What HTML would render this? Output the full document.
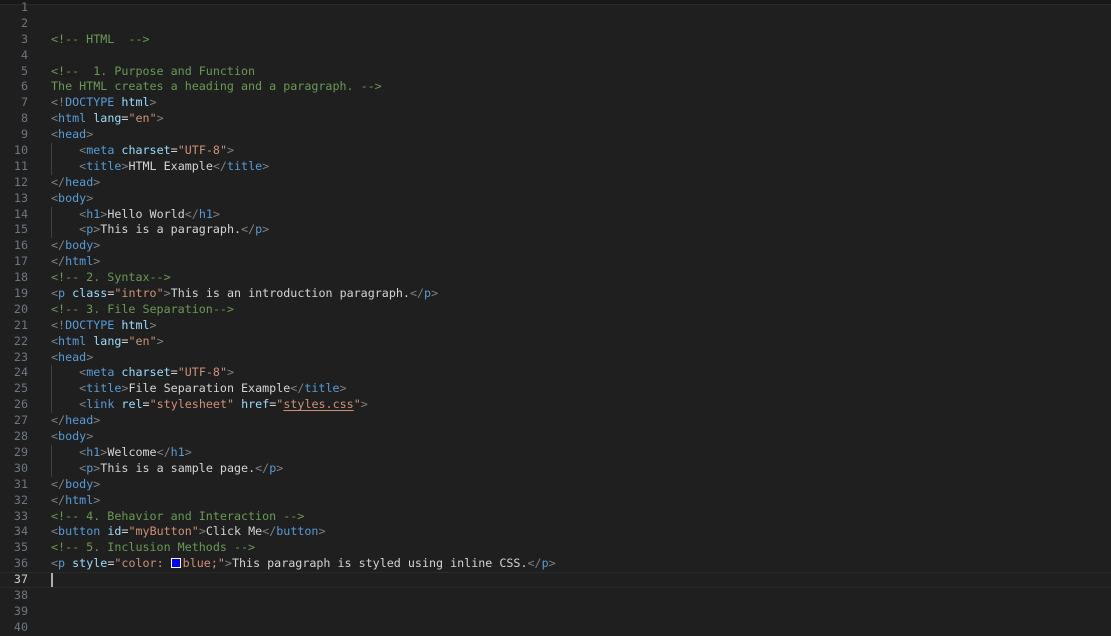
<!DOCTYPE html>
<html><head><meta charset="utf-8"><style>
html,body{margin:0;padding:0;background:#1f1f1f;width:1111px;height:626px;overflow:hidden}
.top{position:absolute;left:0;top:0;width:1111px;height:4px;background:#181818;border-bottom:1px solid #2b2b2b}
.ed{position:absolute;left:0;top:0px;width:1111px;font-family:"DejaVu Sans Mono","Liberation Mono",monospace;font-size:11.7px;line-height:15.9px;color:#d4d4d4}
.l{position:relative;height:15.9px;box-sizing:border-box}
.n{position:absolute;left:0;width:28px;text-align:right;color:#6e7681}
.c{position:absolute;left:51px;white-space:pre}
.cur{border-top:1px solid #2a2a2a;border-bottom:1px solid #2a2a2a;line-height:13.9px}
.cur .n{color:#cccccc}
.g{position:absolute;left:51px;top:0;width:1px;height:15.9px;background:#404040}
.cm{color:#6a9955}.b{color:#808080}.t{color:#569cd6}.a{color:#9cdcfe}.s{color:#ce9178}
.u{text-decoration:underline;text-underline-offset:2px}
.sw{display:inline-block;width:8px;height:8px;border:1px solid #fff;background:#0000ff;margin:0 2px 0 0;vertical-align:-1px}
.caret{display:inline-block;width:1.5px;height:14px;background:#aeafad;vertical-align:-3px}
</style></head><body>
<div class="top"></div>
<div class="ed">
<div class="l"><span class="n">1</span></div>
<div class="l"><span class="n">2</span></div>
<div class="l"><span class="n">3</span><span class="c cm">&lt;!-- HTML  --&gt;</span></div>
<div class="l"><span class="n">4</span></div>
<div class="l"><span class="n">5</span><span class="c cm">&lt;!--  1. Purpose and Function</span></div>
<div class="l"><span class="n">6</span><span class="c cm">The HTML creates a heading and a paragraph. --&gt;</span></div>
<div class="l"><span class="n">7</span><span class="c"><span class="b">&lt;!</span><span class="t">DOCTYPE</span> <span class="a">html</span><span class="b">&gt;</span></span></div>
<div class="l"><span class="n">8</span><span class="c"><span class="b">&lt;</span><span class="t">html</span> <span class="a">lang</span>=<span class="s">"en"</span><span class="b">&gt;</span></span></div>
<div class="l"><span class="n">9</span><span class="c"><span class="b">&lt;</span><span class="t">head</span><span class="b">&gt;</span></span></div>
<div class="l"><span class="n">10</span><span class="g"></span><span class="c">    <span class="b">&lt;</span><span class="t">meta</span> <span class="a">charset</span>=<span class="s">"UTF-8"</span><span class="b">&gt;</span></span></div>
<div class="l"><span class="n">11</span><span class="g"></span><span class="c">    <span class="b">&lt;</span><span class="t">title</span><span class="b">&gt;</span>HTML Example<span class="b">&lt;/</span><span class="t">title</span><span class="b">&gt;</span></span></div>
<div class="l"><span class="n">12</span><span class="c"><span class="b">&lt;/</span><span class="t">head</span><span class="b">&gt;</span></span></div>
<div class="l"><span class="n">13</span><span class="c"><span class="b">&lt;</span><span class="t">body</span><span class="b">&gt;</span></span></div>
<div class="l"><span class="n">14</span><span class="g"></span><span class="c">    <span class="b">&lt;</span><span class="t">h1</span><span class="b">&gt;</span>Hello World<span class="b">&lt;/</span><span class="t">h1</span><span class="b">&gt;</span></span></div>
<div class="l"><span class="n">15</span><span class="g"></span><span class="c">    <span class="b">&lt;</span><span class="t">p</span><span class="b">&gt;</span>This is a paragraph.<span class="b">&lt;/</span><span class="t">p</span><span class="b">&gt;</span></span></div>
<div class="l"><span class="n">16</span><span class="c"><span class="b">&lt;/</span><span class="t">body</span><span class="b">&gt;</span></span></div>
<div class="l"><span class="n">17</span><span class="c"><span class="b">&lt;/</span><span class="t">html</span><span class="b">&gt;</span></span></div>
<div class="l"><span class="n">18</span><span class="c cm">&lt;!-- 2. Syntax--&gt;</span></div>
<div class="l"><span class="n">19</span><span class="c"><span class="b">&lt;</span><span class="t">p</span> <span class="a">class</span>=<span class="s">"intro"</span><span class="b">&gt;</span>This is an introduction paragraph.<span class="b">&lt;/</span><span class="t">p</span><span class="b">&gt;</span></span></div>
<div class="l"><span class="n">20</span><span class="c cm">&lt;!-- 3. File Separation--&gt;</span></div>
<div class="l"><span class="n">21</span><span class="c"><span class="b">&lt;!</span><span class="t">DOCTYPE</span> <span class="a">html</span><span class="b">&gt;</span></span></div>
<div class="l"><span class="n">22</span><span class="c"><span class="b">&lt;</span><span class="t">html</span> <span class="a">lang</span>=<span class="s">"en"</span><span class="b">&gt;</span></span></div>
<div class="l"><span class="n">23</span><span class="c"><span class="b">&lt;</span><span class="t">head</span><span class="b">&gt;</span></span></div>
<div class="l"><span class="n">24</span><span class="g"></span><span class="c">    <span class="b">&lt;</span><span class="t">meta</span> <span class="a">charset</span>=<span class="s">"UTF-8"</span><span class="b">&gt;</span></span></div>
<div class="l"><span class="n">25</span><span class="g"></span><span class="c">    <span class="b">&lt;</span><span class="t">title</span><span class="b">&gt;</span>File Separation Example<span class="b">&lt;/</span><span class="t">title</span><span class="b">&gt;</span></span></div>
<div class="l"><span class="n">26</span><span class="g"></span><span class="c">    <span class="b">&lt;</span><span class="t">link</span> <span class="a">rel</span>=<span class="s">"stylesheet"</span> <span class="a">href</span>=<span class="s">"<span class="u">styles.css</span>"</span><span class="b">&gt;</span></span></div>
<div class="l"><span class="n">27</span><span class="c"><span class="b">&lt;/</span><span class="t">head</span><span class="b">&gt;</span></span></div>
<div class="l"><span class="n">28</span><span class="c"><span class="b">&lt;</span><span class="t">body</span><span class="b">&gt;</span></span></div>
<div class="l"><span class="n">29</span><span class="g"></span><span class="c">    <span class="b">&lt;</span><span class="t">h1</span><span class="b">&gt;</span>Welcome<span class="b">&lt;/</span><span class="t">h1</span><span class="b">&gt;</span></span></div>
<div class="l"><span class="n">30</span><span class="g"></span><span class="c">    <span class="b">&lt;</span><span class="t">p</span><span class="b">&gt;</span>This is a sample page.<span class="b">&lt;/</span><span class="t">p</span><span class="b">&gt;</span></span></div>
<div class="l"><span class="n">31</span><span class="c"><span class="b">&lt;/</span><span class="t">body</span><span class="b">&gt;</span></span></div>
<div class="l"><span class="n">32</span><span class="c"><span class="b">&lt;/</span><span class="t">html</span><span class="b">&gt;</span></span></div>
<div class="l"><span class="n">33</span><span class="c cm">&lt;!-- 4. Behavior and Interaction --&gt;</span></div>
<div class="l"><span class="n">34</span><span class="c"><span class="b">&lt;</span><span class="t">button</span> <span class="a">id</span>=<span class="s">"myButton"</span><span class="b">&gt;</span>Click Me<span class="b">&lt;/</span><span class="t">button</span><span class="b">&gt;</span></span></div>
<div class="l"><span class="n">35</span><span class="c cm">&lt;!-- 5. Inclusion Methods --&gt;</span></div>
<div class="l"><span class="n">36</span><span class="c"><span class="b">&lt;</span><span class="t">p</span> <span class="a">style</span>=<span class="s">"color: <span class="sw"></span>blue;"</span><span class="b">&gt;</span>This paragraph is styled using inline CSS.<span class="b">&lt;/</span><span class="t">p</span><span class="b">&gt;</span></span></div>
<div class="l cur"><span class="n">37</span><span class="c"><span class="caret"></span></span></div>
<div class="l"><span class="n">38</span></div>
<div class="l"><span class="n">39</span></div>
<div class="l"><span class="n">40</span></div>
</div>
</body></html>
